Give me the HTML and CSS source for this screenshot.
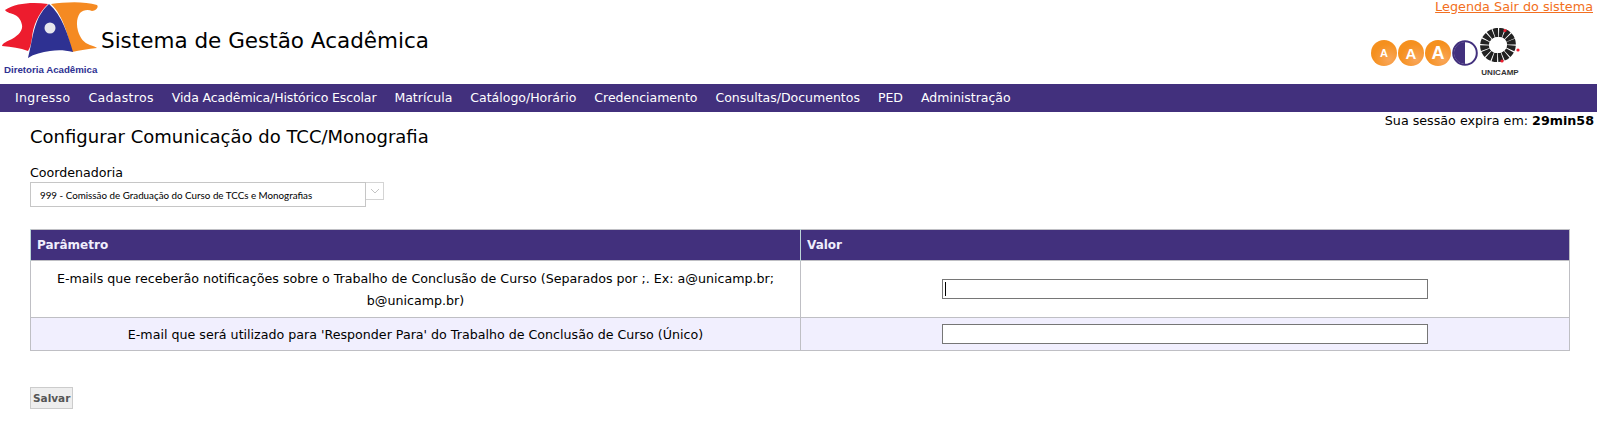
FILE: index.html
```html
<!DOCTYPE html>
<html lang="pt-br">
	<head>
		<meta charset="utf-8">
		<title>Sistema de Gestão Acadêmica</title>
		<link rel="stylesheet" href="styles.css">
	</head>
	<body>
		<!-- header -->
		<div class="header">
			<div class="brand">
				<div class="logo-box">
					<svg class="logo-dac" viewBox="0 2 100 60">
						<path fill="#ed1c2e" d="M5 10C16 3 32 2 48 4C38 14 33 26 32 38C31 44 30 48 28 51C20 48 12 47 2 46C2 43 8 41 12 39C19 35 23 30 22 25C21 20 19 17 15 15C11 13 7 13 5 10Z"/>
						<path fill="#f58a22" d="M51 4C65 2 84 1 97 5C99 7 96 11 92 11C88 9 83 10 80 13C77 17 76 24 78 31C80 38 84 43 90 45C93 46 96 47 97 48C88 49 80 50 72 52C69 40 64 16 51 4Z"/>
						<path fill="#2e3192" d="M49 4C62 15 68 35 73 52C64 50 58 50 50 51C42 52 34 54 28 58C33 40 33 18 49 4Z"/>
						<circle cx="50" cy="28" r="5.5" fill="#e6e7ee"/>
					</svg>
					<span class="logo-label">Diretoria Acadêmica</span>
				</div>
				<h1 class="system-title">Sistema de Gestão Acadêmica</h1>
			</div>
			<div class="header-right">
				<div class="top-links"><a href="#">Legenda </a><a href="#">Sair do sistema</a></div>
				<div class="tools">
					<span class="font-btn font-sm">A</span>
					<span class="font-btn font-md">A</span>
					<span class="font-btn font-lg">A</span>
					<svg class="contrast-btn" viewBox="0 0 26 26">
						<circle cx="13" cy="13" r="11.8" fill="#fff" stroke="#42307d" stroke-width="2"/>
						<path fill="#42307d" d="M13 2A11 11 0 0 0 13 24Z"/>
					</svg>
					<div class="unicamp">
						<svg class="unicamp-mark" viewBox="0 0 42 38">
							<ellipse cx="19" cy="17" rx="13.500" ry="12.500" fill="none" stroke="#222" stroke-width="9" stroke-dasharray="4.200 0.900" transform="rotate(-20 19 17)"/>
							<ellipse cx="19" cy="17" rx="9" ry="8" fill="#fff"/>
							<circle cx="26" cy="2.500" r="1.600" fill="#ed1c2e"/>
							<circle cx="39" cy="22" r="1.600" fill="#ed1c2e"/>
							<circle cx="23" cy="33" r="1.600" fill="#ed1c2e"/>
						</svg>
						<span class="unicamp-label">UNICAMP</span>
					</div>
				</div>
			</div>
		</div>
		<!-- .header -->

		<!-- menu -->
		<ul class="menu">
			<li class="menu-wide">Ingresso</li>
			<li class="menu-wide">Cadastros</li>
			<li class="menu-narrow">Vida Acadêmica/Histórico Escolar</li>
			<li>Matrícula</li>
			<li>Catálogo/Horário</li>
			<li>Credenciamento</li>
			<li>Consultas/Documentos</li>
			<li>PED</li>
			<li>Administração</li>
		</ul>
		<!-- .menu -->

		<div class="session">Sua sessão expira em: <b>29min58</b></div>

		<div class="content">
			<h2 class="page-title">Configurar Comunicação do TCC/Monografia</h2>

			<label class="field-label">Coordenadoria</label>
			<div class="combo">
				<div class="combo-value">999 - Comissão de Graduação do Curso de TCCs e Monografias</div>
				<div class="combo-arrow">
					<svg viewBox="0 0 10 6"><path d="M1 1L5 5L9 1" fill="none" stroke="#c4c4c4"/></svg>
				</div>
			</div>

			<table class="params">
				<thead>
					<tr>
						<th class="col-param">Parâmetro</th>
						<th>Valor</th>
					</tr>
				</thead>
				<tbody>
					<tr>
						<td>E-mails que receberão notificações sobre o Trabalho de Conclusão de Curso (Separados por ;. Ex: a@unicamp.br; b@unicamp.br)</td>
						<td class="cell-input">
							<div class="text-input"><span class="caret"></span></div>
						</td>
					</tr>
					<tr class="alt">
						<td>E-mail que será utilizado para 'Responder Para' do Trabalho de Conclusão de Curso (Único)</td>
						<td class="cell-input">
							<div class="text-input"></div>
						</td>
					</tr>
				</tbody>
			</table>

			<button class="btn-save">Salvar</button>
		</div>
	</body>
</html>
```

FILE: styles.css
```css
html, body {
	margin: 0;
	padding: 0;
	background: #fff;
}
body {
	font-family: "DejaVu Sans", Verdana, sans-serif;
	font-size: 12.65px;
	color: #000;
}

/* header */
.header {
	display: flex;
	justify-content: space-between;
	height: 84px;
}
.brand {
	display: flex;
	align-items: flex-start;
}
.logo-box {
	display: flex;
	flex-direction: column;
	width: 100px;
	padding-top: 2px;
}
.logo-dac {
	width: 100px;
	height: 60px;
}
.logo-label {
	margin: 2px 0 0 4px;
	font-family: "Liberation Sans", sans-serif;
	font-size: 9.7px;
	font-weight: bold;
	color: #2e3192;
	white-space: nowrap;
}
.system-title {
	margin: 27px 0 0 1px;
	font-size: 21.5px;
	font-weight: normal;
	line-height: 28px;
}
.header-right {
	display: flex;
	flex-direction: column;
	align-items: flex-end;
}
.top-links {
	padding-right: 4px;
	font-size: 12.8px;
	line-height: 14px;
}
.top-links a {
	color: #f26f21;
}
.tools {
	display: flex;
	align-items: flex-start;
	gap: 1px;
	margin: 14px 76px 0 0;
}
.font-btn {
	display: flex;
	justify-content: center;
	align-items: center;
	width: 26px;
	height: 26px;
	margin-top: 12px;
	border-radius: 50%;
	background: radial-gradient(circle at 70% 75%, #f9a65a, #f5901e 60%);
	color: #fff;
	font-family: "Liberation Sans", sans-serif;
	font-weight: bold;
}
.font-sm {
	font-size: 11px;
}
.font-md {
	font-size: 15px;
}
.font-lg {
	font-size: 18px;
}
.contrast-btn {
	width: 26px;
	height: 26px;
	margin-top: 12px;
}
.unicamp {
	display: flex;
	flex-direction: column;
	align-items: center;
}
.unicamp-mark {
	width: 42px;
	height: 38px;
}
.unicamp-label {
	margin-top: 2px;
	font-family: "Liberation Sans", sans-serif;
	font-size: 8px;
	font-weight: bold;
	color: #333;
	line-height: 9px;
}

/* menu */
.menu {
	display: flex;
	gap: 18px;
	height: 28px;
	margin: 0;
	padding: 0 0 0 15px;
	background: #42307d;
	color: #fff;
	list-style: none;
	line-height: 28px;
	font-size: 12.5px;
}
.menu-wide {
	letter-spacing: 0.33px;
}
.menu-narrow {
	letter-spacing: -0.12px;
}

.session {
	padding-right: 3px;
	font-size: 12.7px;
	text-align: right;
	line-height: 17px;
}

/* conteudo */
.content {
	padding: 0 27px 0 30px;
}
.page-title {
	margin: -4px 0 0 0;
	font-size: 18px;
	font-weight: normal;
	line-height: 24px;
}
.field-label {
	display: block;
	margin-top: 15px;
	line-height: 18px;
}
.combo {
	display: flex;
	align-items: flex-start;
}
.combo-value {
	box-sizing: border-box;
	width: 336px;
	height: 25px;
	padding-left: 9px;
	border: 1px solid #c6c6c6;
	font-family: Lato, sans-serif;
	font-size: 9.8px;
	line-height: 24px;
}
.combo-arrow {
	box-sizing: border-box;
	display: flex;
	justify-content: center;
	align-items: center;
	width: 18px;
	height: 18px;
	border: 1px solid #d4d4d4;
	border-left: 0;
}
.combo-arrow svg {
	width: 10px;
	height: 6px;
}
.params {
	width: 100%;
	margin-top: 22px;
	border-collapse: collapse;
	table-layout: fixed;
	border: 1px solid #bfbfc4;
}
.params th {
	height: 30px;
	padding: 0 6px;
	background: #42307d;
	color: #f0eefc;
	font-size: 12px;
	text-align: left;
	border-left: 1px solid #bcd6d6;
}
.params th.col-param {
	width: 757px;
}
.params td {
	padding: 7px 5px 5px;
	border: 1px solid #bfbfc4;
	text-align: center;
	line-height: 22px;
}
.params .alt td {
	padding: 6px 5px 4px;
	background: #f1effe;
}
.params td.cell-input {
	padding: 5px;
}
.cell-input .text-input {
	box-sizing: border-box;
	position: relative;
	width: 486px;
	height: 20px;
	margin: 0 auto;
	border: 1px solid #767676;
	background: #fff;
}
.caret {
	position: absolute;
	left: 2px;
	top: 2px;
	width: 1px;
	height: 14px;
	background: #000;
}
.btn-save {
	display: block;
	height: 22px;
	margin-top: 36px;
	padding: 0 2px;
	border: 1px solid #ccc;
	background: #eee;
	color: #555;
	font-family: inherit;
	font-size: 10.5px;
	font-weight: bold;
}
```
